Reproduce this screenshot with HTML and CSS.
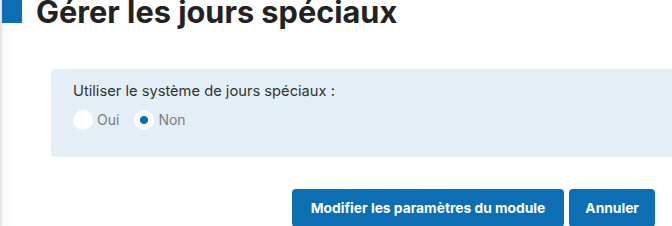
FILE: index.html
```html
<!DOCTYPE html>
<html lang="fr">
<head>
  <meta charset="UTF-8">
  <title>Gérer les jours spéciaux</title>
  <link rel="stylesheet" href="styles.css">
</head>
<body>
  <div class="page">
    <h1 class="title"><span class="mark"></span>Gérer les jours spéciaux</h1>

    <div class="panel">
      <p class="label">Utiliser le système de jours spéciaux :</p>
      <div class="choices">
        <label class="choice"><span class="radio"></span>Oui</label>
        <label class="choice"><span class="radio on"></span>Non</label>
      </div>
    </div>

    <div class="actions">
      <button class="btn">Modifier les paramètres du module</button>
      <button class="btn btn-cancel">Annuler</button>
    </div>
  </div>
</body>
</html>
```

FILE: styles.css
```css
*{margin: 0;padding: 0;box-sizing: border-box;}
body {
  font-family: Inter, "Liberation Sans", sans-serif;
  background: #fff;
  color: #222;
}
.page {
  border-left: 2px solid #e3e7eb;
  height: 226px;
  overflow: hidden;
  background: linear-gradient(to right, #f8f9fa 0, #fff 14px);
}
.title {
  display: flex;
  align-items: flex-start;
  gap: 14px;
  font-size: 30.7px;
  font-weight: 700;
  line-height: 30px;
  color: #222;
  margin-top: -3px;
}
.mark {
  width: 20px;
  height: 23px;
  margin-top: 3px;
  background: #0d6eb3;
}
.panel {
  margin: 42px 0 0 49px;
  height: 88px;
  background: #e4eef7;
  border-radius: 4px 0 0 4px;
  padding: 13px 22px;
}
.label {
  font-size: 14.7px;
  line-height: 18px;
  color: #333;
}
.choices {
  display: flex;
  gap: 15px;
  margin-top: 10px;
}
.choice {
  display: flex;
  align-items: center;
  gap: 4px;
  font-size: 14px;
  line-height: 20px;
  color: #7b7b7b;
}
.radio {
  width: 20px;
  height: 20px;
  border-radius: 50%;
  background: #fff;
  display: flex;
  align-items: center;
  justify-content: center;
}
.radio.on::after {
  content: "";
  width: 8px;
  height: 8px;
  border-radius: 50%;
  background: #0d6eb3;
}
.actions {
  display: flex;
  justify-content: flex-end;
  gap: 5px;
  margin-top: 32px;
  padding-right: 17px;
}
.btn {
  font-family: Inter, "Liberation Sans", sans-serif;
  font-size: 13.8px;
  font-weight: 700;
  color: #fff;
  background: #0d6eb3;
  border: none;
  border-radius: 4px;
  height: 38px;
  padding: 0 19px;
}
.btn-cancel {
  padding: 0 16px;
}
```
